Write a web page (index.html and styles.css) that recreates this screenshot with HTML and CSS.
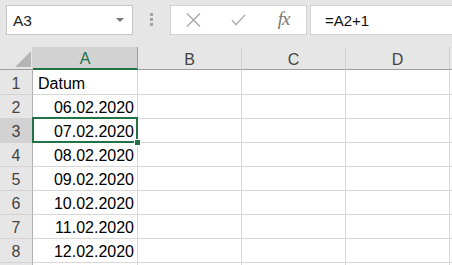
FILE: index.html
```html
<!DOCTYPE html>
<html>
<head>
<meta charset="utf-8">
<link rel="stylesheet" href="styles.css">
</head>
<body>
<div class="app">
  <div class="formula-bar">
    <div class="namebox">
      <span class="ref">A3</span>
      <svg class="arrow" width="8" height="5" viewBox="0 0 8 5"><polygon points="0,0 8,0 4,4" fill="#7a7a7a"/></svg>
    </div>
    <div class="grip"><span></span><span></span><span></span></div>
    <div class="fx-buttons">
      <div class="btn">
        <svg width="15" height="14" viewBox="0 0 15 14"><path d="M1 0.5 L14 13.5 M14 0.5 L1 13.5" stroke="#a8a8a8" stroke-width="1.4" fill="none"/></svg>
      </div>
      <div class="btn">
        <svg width="15" height="12" viewBox="0 0 15 12"><path d="M1 6 L5 10.5 L14 1" stroke="#b4b4b4" stroke-width="1.6" fill="none"/></svg>
      </div>
      <div class="btn"><span class="fx">fx</span></div>
    </div>
    <div class="formula">=A2+1</div>
  </div>
  <div class="sheet">
    <div class="hdr corner"><svg width="32" height="22" viewBox="0 0 32 22"><polygon points="31,4 31,20 15,20" fill="#b5b5b5"/></svg></div>
    <div class="hdr col active">A</div>
    <div class="hdr col">B</div>
    <div class="hdr col">C</div>
    <div class="hdr col">D</div>
    <div class="hdr col"></div>

    <div class="hdr row">1</div>
    <div class="cell">Datum</div><div class="cell"></div><div class="cell"></div><div class="cell"></div><div class="cell"></div>

    <div class="hdr row">2</div>
    <div class="cell num">06.02.2020</div><div class="cell"></div><div class="cell"></div><div class="cell"></div><div class="cell"></div>

    <div class="hdr row active">3</div>
    <div class="cell num selected">07.02.2020</div><div class="cell"></div><div class="cell"></div><div class="cell"></div><div class="cell"></div>

    <div class="hdr row">4</div>
    <div class="cell num">08.02.2020</div><div class="cell"></div><div class="cell"></div><div class="cell"></div><div class="cell"></div>

    <div class="hdr row">5</div>
    <div class="cell num">09.02.2020</div><div class="cell"></div><div class="cell"></div><div class="cell"></div><div class="cell"></div>

    <div class="hdr row">6</div>
    <div class="cell num">10.02.2020</div><div class="cell"></div><div class="cell"></div><div class="cell"></div><div class="cell"></div>

    <div class="hdr row">7</div>
    <div class="cell num">11.02.2020</div><div class="cell"></div><div class="cell"></div><div class="cell"></div><div class="cell"></div>

    <div class="hdr row">8</div>
    <div class="cell num">12.02.2020</div><div class="cell"></div><div class="cell"></div><div class="cell"></div><div class="cell"></div>

    <div class="hdr row"></div>
    <div class="cell"></div><div class="cell"></div><div class="cell"></div><div class="cell"></div><div class="cell"></div>
  </div>
</div>
</body>
</html>
```

FILE: styles.css
```css
html, body {
  margin: 0;
  padding: 0;
  background: #e6e6e6;
  overflow: hidden;
}
.app {
  width: 452px;
  height: 265px;
  overflow: hidden;
  font-family: "Liberation Sans", Arial, sans-serif;
}
.formula-bar {
  display: flex;
  align-items: flex-start;
  height: 47px;
  box-sizing: border-box;
  padding: 5px 0 0 6px;
  background: #e6e6e6;
  overflow: hidden;
}
.formula-bar > * {
  flex: none;
}
.namebox {
  box-sizing: border-box;
  width: 127px;
  height: 30px;
  background: #fff;
  border: 1px solid #c6c6c6;
  display: flex;
  align-items: center;
  justify-content: space-between;
  padding: 0 8px 0 6px;
}
.ref {
  font-size: 15.5px;
  color: #222;
  padding-top: 1px;
}
.arrow {
  display: block;
  margin-top: 1px;
}
.grip {
  margin-left: 17px;
  margin-top: 8px;
  display: flex;
  flex-direction: column;
  gap: 2px;
}
.grip span {
  display: block;
  width: 3px;
  height: 3px;
  background: #a2a2a2;
}
.fx-buttons {
  margin-left: 17px;
  box-sizing: border-box;
  width: 137px;
  height: 30px;
  background: #fff;
  border: 1px solid #d0d0d0;
  display: flex;
}
.btn {
  width: 45px;
  height: 28px;
  display: flex;
  align-items: center;
  justify-content: center;
}
.fx {
  font-family: "Liberation Serif", "Times New Roman", serif;
  font-style: italic;
  font-size: 19px;
  color: #7a7a7a;
  letter-spacing: -1px;
  margin-top: -2px;
}
.formula {
  margin-left: 3px;
  box-sizing: border-box;
  width: 160px;
  height: 30px;
  background: #fff;
  border: 1px solid #d0d0d0;
  font-size: 15px;
  color: #111;
  padding: 6px 0 0 14px;
}
.sheet {
  display: grid;
  grid-template-columns: 33px 105px 104px 104px 104px 104px;
  grid-template-rows: 23px 25px repeat(8, 24px);
  font-size: 16px;
  line-height: 18px;
}
.sheet > div {
  box-sizing: border-box;
  display: flex;
  align-items: flex-end;
}
.hdr {
  background: #e6e6e6;
  color: #444;
  justify-content: center;
}
.hdr.col {
  border-right: 1px solid #d2d2d2;
  border-bottom: 1px solid #9e9e9e;
}
.hdr.col.active {
  background: #d2d2d2;
  color: #217346;
  border-bottom: 2px solid #217346;
  border-right-color: #9e9e9e;
}
.hdr.corner {
  border-right: 1px solid #d2d2d2;
  border-bottom: 1px solid #9e9e9e;
  align-items: flex-start !important;
}
.hdr.corner svg {
  display: block;
}
.hdr.row {
  border-right: 1px solid #b0b0b0;
  border-bottom: 1px solid #d2d2d2;
  padding-bottom: 1px;
}
.hdr.row.active {
  background: #d2d2d2;
}
.cell {
  background: #fff;
  border-right: 1px solid #d8d8d8;
  border-bottom: 1px solid #d8d8d8;
  color: #000;
  padding: 0 4px 1px 5px;
  position: relative;
}
.cell.num {
  justify-content: flex-end;
  padding-right: 3px;
}
.cell.selected::after {
  content: "";
  position: absolute;
  top: -2px;
  left: -1px;
  right: -1px;
  bottom: -1px;
  border: 2px solid #217346;
}
.cell.selected::before {
  content: "";
  position: absolute;
  right: -4px;
  bottom: -4px;
  width: 5px;
  height: 5px;
  background: #217346;
  border: 1px solid #fff;
  z-index: 2;
}
```
